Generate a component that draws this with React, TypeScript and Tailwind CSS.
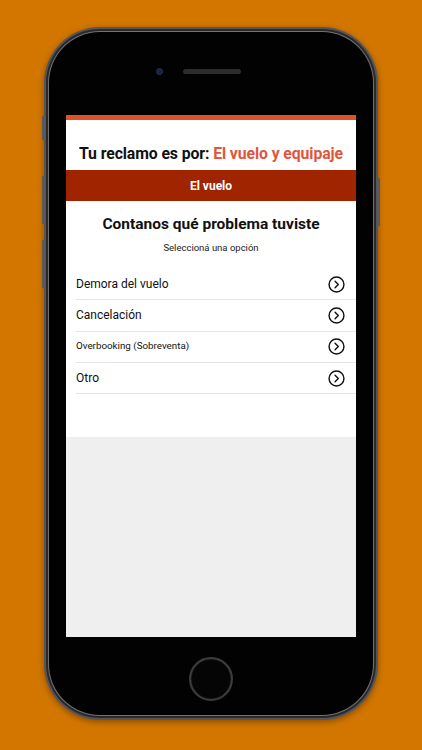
import React from "react";

function ChevronCircle() {
  return (
    <svg width="17" height="17" viewBox="0 0 24 24" fill="none" stroke="#111" strokeWidth="2" strokeLinecap="round" strokeLinejoin="round">
      <circle cx="12" cy="12" r="10.5" />
      <path d="M10 7.5 L14.5 12 L10 16.5" />
    </svg>
  );
}

const rows = [
  { label: "Demora del vuelo", small: false },
  { label: "Cancelación", small: false },
  { label: "Overbooking (Sobreventa)", small: true },
  { label: "Otro", small: false },
];

export default function App() {
  return (
    <div
      className="w-[422px] h-[750px] bg-[#d27600] overflow-hidden pt-[27px] pl-[44px]"
      style={{ fontFamily: "Roboto, 'Liberation Sans', sans-serif" }}
    >
      <div className="relative w-[334px] h-[693px]">
        {/* side buttons */}
        <div className="absolute left-[-2px] top-[88px] w-[3px] h-[26px] rounded-l bg-[#5a5a5e]" />
        <div className="absolute left-[-2px] top-[148px] w-[3px] h-[50px] rounded-l bg-[#5a5a5e]" />
        <div className="absolute left-[-2px] top-[212px] w-[3px] h-[50px] rounded-l bg-[#5a5a5e]" />
        <div className="absolute right-[-2px] top-[150px] w-[3px] h-[50px] rounded-r bg-[#5a5a5e]" />
        <div className="w-full h-full rounded-[56px] bg-[#55555a] p-[2px] shadow-[0_2px_6px_rgba(0,0,0,0.35)]">
          <div className="w-full h-full rounded-[54px] bg-[#2a2a2d] p-[2px]">
            <div className="w-full h-full rounded-[52px] bg-[#707075] p-[1px]">
              <div className="w-full h-full rounded-[51px] bg-[#020202] flex flex-col items-center">
                <div className="h-[83px] w-full flex items-center justify-center gap-[20px] pr-[26px] pb-[4px]">
                  <div className="w-[7px] h-[7px] rounded-full bg-[#1b2340] border border-[#2a3150]" />
                  <div className="w-[58px] h-[5px] rounded-full bg-[#2c2c2e]" />
                </div>
                <div className="w-[290px] h-[522px] bg-[#efefef] flex flex-col">
                  <div className="h-[5px] bg-[#e0502a]" />
                  <div className="bg-white h-[317px] flex flex-col">
                    <div className="h-[50px] flex items-center justify-center pt-[17px] text-[15.8px] font-bold text-[#111] tracking-[-0.1px] whitespace-nowrap">
                      Tu reclamo es por:&nbsp;<span className="text-[#e2553a]">El vuelo y equipaje</span>
                    </div>
                    <div className="h-[31px] bg-[#a02400] flex items-center justify-center text-white text-[12px] font-bold">
                      El vuelo
                    </div>
                    <div className="h-[37px] flex items-end justify-center pb-[2px] text-[15.5px] font-bold text-[#111]">
                      Contanos qué problema tuviste
                    </div>
                    <div className="h-[21px] flex items-center justify-center text-[9.5px] text-[#222]">
                      Seleccioná una opción
                    </div>
                    <div className="pl-[10px] pt-[10px]">
                      {rows.map((r) => (
                        <div
                          key={r.label}
                          className="h-[31.3px] flex items-center justify-between border-b border-[#e6e6e6] pr-[11px]"
                        >
                          <span className={r.small ? "text-[9.8px] text-[#111]" : "text-[12px] text-[#111]"}>
                            {r.label}
                          </span>
                          <ChevronCircle />
                        </div>
                      ))}
                    </div>
                  </div>
                </div>
                <div className="flex-1 w-full flex justify-center pt-[20px]">
                  <div className="w-[44px] h-[44px] rounded-full border-[2px] border-[#3c3c3f] bg-[#050505] shadow-[inset_0_0_1px_rgba(255,255,255,0.4)]" />
                </div>
              </div>
            </div>
          </div>
        </div>
      </div>
    </div>
  );
}
